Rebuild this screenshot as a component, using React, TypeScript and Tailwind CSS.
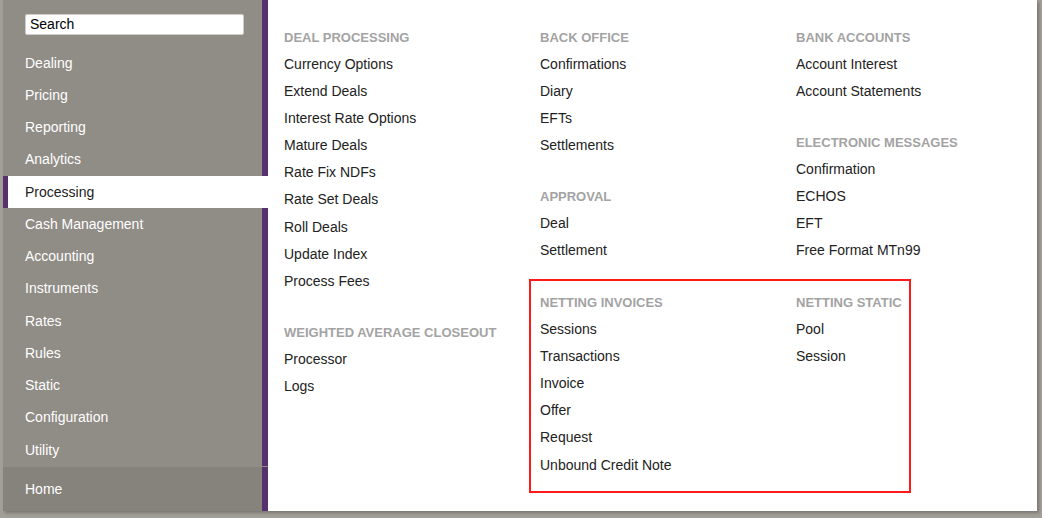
import React from 'react';

const navItems = [
  'Dealing',
  'Pricing',
  'Reporting',
  'Analytics',
  'Processing',
  'Cash Management',
  'Accounting',
  'Instruments',
  'Rates',
  'Rules',
  'Static',
  'Configuration',
  'Utility',
];

type Group = { title: string; items: string[] };

const col1: Group[] = [
  {
    title: 'Deal Processing',
    items: [
      'Currency Options',
      'Extend Deals',
      'Interest Rate Options',
      'Mature Deals',
      'Rate Fix NDFs',
      'Rate Set Deals',
      'Roll Deals',
      'Update Index',
      'Process Fees',
    ],
  },
  { title: 'Weighted Average Closeout', items: ['Processor', 'Logs'] },
];

const col2: Group[] = [
  { title: 'Back Office', items: ['Confirmations', 'Diary', 'EFTs', 'Settlements'] },
  { title: 'Approval', items: ['Deal', 'Settlement'] },
];

const col3: Group[] = [
  { title: 'Bank Accounts', items: ['Account Interest', 'Account Statements'] },
  { title: 'Electronic Messages', items: ['Confirmation', 'ECHOS', 'EFT', 'Free Format MTn99'] },
];

const nettingInvoices: Group = {
  title: 'Netting Invoices',
  items: ['Sessions', 'Transactions', 'Invoice', 'Offer', 'Request', 'Unbound Credit Note'],
};

const nettingStatic: Group = { title: 'Netting Static', items: ['Pool', 'Session'] };

function MenuGroup({ group }: { group: Group }) {
  return (
    <div className="mb-[24px] last:mb-0">
      <div className="h-[27px] leading-[27px] text-[13px] font-bold uppercase text-[#a3a3a3] whitespace-nowrap">
        {group.title}
      </div>
      {group.items.map((item) => (
        <div key={item} className="h-[27.2px] leading-[27px] text-[14px] text-[#222222] whitespace-nowrap cursor-pointer">
          {item}
        </div>
      ))}
    </div>
  );
}

export default function App() {
  return (
    <div
      className="w-[1042px] h-[518px] bg-[#a29e98] overflow-hidden"
      style={{ fontFamily: '"Liberation Sans", Arial, sans-serif' }}
    >
      <div className="ml-[3px] w-[1034px] h-[511px] bg-white flex shadow-[2px_2px_3px_rgba(0,0,0,0.25)]">
        {/* Sidebar */}
        <div className="w-[265px] shrink-0 h-full flex flex-col bg-[#908c86]">
          <div className="flex">
            <div className="flex-1 pt-[14px] pl-[22px] pb-[12px]">
              <div className="w-[219px] h-[21px] bg-white rounded-[2px] border border-[#d0cdc8] pl-[4px] text-[14px] leading-[19px] text-black">
                Search
              </div>
            </div>
            <div className="w-[6px] bg-[#55326b]" />
          </div>
          <div className="flex-1 flex flex-col">
            {navItems.map((item) =>
              item === 'Processing' ? (
                <div key={item} className="h-[32.25px] flex items-center bg-white border-l-[5px] border-[#55326b]">
                  <span className="pl-[17px] text-[14px] text-[#222222]">{item}</span>
                </div>
              ) : (
                <div key={item} className="h-[32.25px] flex">
                  <div className="flex-1 flex items-center pl-[22px] text-[14px] text-white">{item}</div>
                  <div className="w-[6px] bg-[#55326b]" />
                </div>
              ),
            )}
          </div>
          <div className="h-[44px] flex bg-[#86827c]">
            <div className="flex-1 flex items-center pl-[22px] text-[14px] text-white">Home</div>
            <div className="w-[6px] bg-[#55326b]" />
          </div>
        </div>

        {/* Menu content */}
        <div className="flex-1 pt-[23.5px] pl-[16px] flex">
          <div className="w-[256px] shrink-0">
            {col1.map((g) => (
              <MenuGroup key={g.title} group={g} />
            ))}
          </div>
          <div className="flex flex-col">
            <div className="flex">
              <div className="w-[256px] shrink-0">
                {col2.map((g) => (
                  <MenuGroup key={g.title} group={g} />
                ))}
              </div>
              <div className="w-[256px] shrink-0">
                {col3.map((g) => (
                  <MenuGroup key={g.title} group={g} />
                ))}
              </div>
            </div>
            <div className="mt-[14.5px] -ml-[11px] w-[382px] border-2 border-[#ff1a1a] pt-[7.5px] pb-[12.5px] pl-[9px] flex">
              <div className="w-[256px] shrink-0">
                <MenuGroup group={nettingInvoices} />
              </div>
              <div>
                <MenuGroup group={nettingStatic} />
              </div>
            </div>
          </div>
        </div>
      </div>
    </div>
  );
}
